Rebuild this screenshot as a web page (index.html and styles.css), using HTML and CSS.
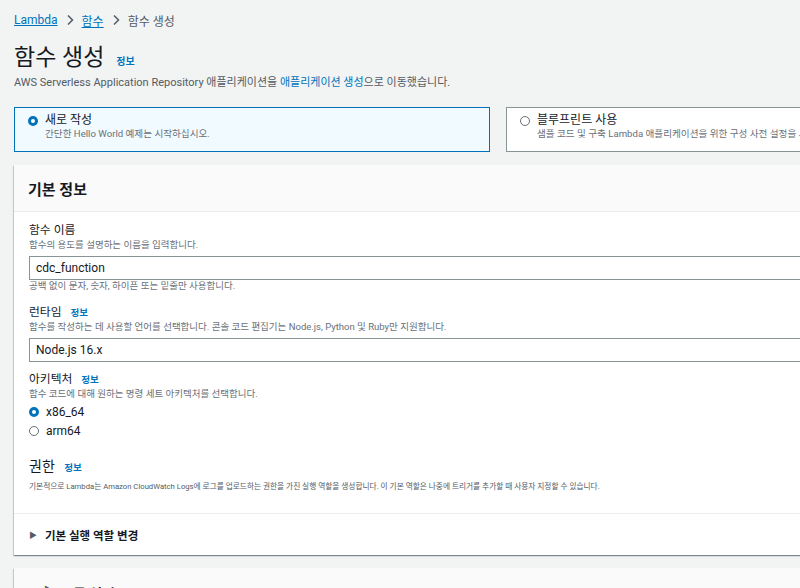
FILE: index.html
```html
<!DOCTYPE html>
<html lang="ko">
<head>
<meta charset="utf-8">
<title>함수 생성</title>
<link rel="stylesheet" href="styles.css">
</head>
<body>
<div class="page">
  <nav class="crumbs">
    <a class="link">Lambda</a>
    <svg class="chev" width="10" height="12" viewBox="0 0 10 12"><path d="M3 1.5 L7.5 6 L3 10.5" fill="none" stroke="#545b64" stroke-width="1.5"/></svg>
    <a class="link">함수</a>
    <svg class="chev" width="10" height="12" viewBox="0 0 10 12"><path d="M3 1.5 L7.5 6 L3 10.5" fill="none" stroke="#545b64" stroke-width="1.5"/></svg>
    <span class="current">함수 생성</span>
  </nav>

  <div class="title-row">
    <h1 class="title">함수 생성</h1>
    <span class="info big">정보</span>
  </div>
  <p class="subtitle">AWS Serverless Application Repository 애플리케이션을 <span class="blue">애플리케이션 생성</span>으로 이동했습니다.</p>

  <div class="tiles">
    <div class="tile selected">
      <span class="radio on"></span>
      <div class="tile-text">
        <div class="tile-title">새로 작성</div>
        <div class="tile-desc">간단한 Hello World 예제는 시작하십시오.</div>
      </div>
    </div>
    <div class="tile">
      <span class="radio"></span>
      <div class="tile-text">
        <div class="tile-title">블루프린트 사용</div>
        <div class="tile-desc">샘플 코드 및 구축 Lambda 애플리케이션을 위한 구성 사전 설정을 사용하여 구축합니다.</div>
      </div>
    </div>
  </div>

  <section class="card">
    <header class="card-head">기본 정보</header>
    <div class="card-body">
      <div class="field f-name">
        <div class="label">함수 이름</div>
        <div class="desc">함수의 용도를 설명하는 이름을 입력합니다.</div>
        <div class="input">cdc_function</div>
        <div class="hint">공백 없이 문자, 숫자, 하이픈 또는 밑줄만 사용합니다.</div>
      </div>
      <div class="field f-runtime">
        <div class="label">런타임 <span class="info">정보</span></div>
        <div class="desc">함수를 작성하는 데 사용할 언어를 선택합니다. 콘솔 코드 편집기는 Node.js, Python 및 Ruby만 지원합니다.</div>
        <div class="input">Node.js 16.x</div>
      </div>
      <div class="field f-arch">
        <div class="label">아키텍처 <span class="info">정보</span></div>
        <div class="desc">함수 코드에 대해 원하는 명령 세트 아키텍처를 선택합니다.</div>
        <div class="opts">
          <div class="opt"><span class="radio on"></span>x86_64</div>
          <div class="opt"><span class="radio"></span>arm64</div>
        </div>
      </div>
      <div class="field perm">
        <div class="perm-title">권한 <span class="info">정보</span></div>
        <div class="tiny">기본적으로 Lambda는 Amazon CloudWatch Logs에 로그를 업로드하는 권한을 가진 실행 역할을 생성합니다. 이 기본 역할은 나중에 트리거를 추가할 때 사용자 지정할 수 있습니다.</div>
      </div>
    </div>
    <div class="expander"><span class="tri">▶</span>기본 실행 역할 변경</div>
  </section>

  <section class="card second">
    <header class="card-head small"><span class="tri">▶</span>고급 설정</header>
  </section>
</div>
</body>
</html>
```

FILE: styles.css
```css
html, body {
  margin: 0;
  padding: 0;
  background: #f2f3f3;
  overflow: hidden;
}
body {
  font-family: "Roboto", "Noto Sans CJK KR", sans-serif;
  color: #16191f;
  width: 800px;
  height: 588px;
}
.page {
  width: 968px;
  padding: 11px 0 0 14px;
}
.crumbs {
  display: flex;
  align-items: center;
  gap: 5px;
  font-size: 12px;
  height: 18px;
}
.link {
  color: #0073bb;
  text-decoration: underline;
}
.current { color: #545b64; }
.chev { display: block; margin: 0 2px; }
.title-row {
  display: flex;
  align-items: baseline;
  gap: 12px;
  margin-top: 14px;
}
.title {
  margin: 0;
  font-size: 23px;
  font-weight: 400;
  line-height: 30px;
}
.info {
  color: #0073bb;
  font-size: 9.5px;
  font-weight: 700;
  margin-left: 6px;
}
.info.big { font-size: 10px; margin-left: 0; }
.subtitle {
  margin: 2px 0 0;
  font-size: 11px;
  line-height: 16px;
  color: #545b64;
}
.blue { color: #0073bb; }
.tiles {
  display: grid;
  grid-template-columns: 476px 476px;
  gap: 16px;
  margin-top: 16px;
}
.tile {
  display: flex;
  align-items: flex-start;
  gap: 7px;
  height: 45px;
  box-sizing: border-box;
  border: 1px solid #879596;
  background: #fff;
  padding: 5px 13px;
}
.tile.selected {
  border-color: #0073bb;
  background: #f1faff;
}
.radio {
  flex: none;
  width: 8px;
  height: 8px;
  border-radius: 50%;
  border: 1px solid #687078;
  background: #fff;
  margin-top: 3px;
}
.radio.on {
  width: 4px;
  height: 4px;
  border: 3px solid #0073bb;
}
.tile-title {
  font-size: 12px;
  line-height: 14px;
}
.tile-desc {
  font-size: 9.6px;
  line-height: 14px;
  color: #687078;
  white-space: nowrap;
}
.card {
  margin-top: 13px;
  background: #fff;
  box-shadow: 0 1px 1px 0 rgba(0,28,36,.3), 1px 1px 1px 0 rgba(0,28,36,.15), -1px 1px 1px 0 rgba(0,28,36,.15);
}
.card-head {
  background: #fafafa;
  border-bottom: 1px solid #eaeded;
  height: 46px;
  display: flex;
  align-items: center;
  padding-left: 14px;
  font-size: 15px;
  font-weight: 700;
}
.card-body {
  padding: 11px 0 0 15px;
}
.label {
  font-size: 11.8px;
  line-height: 15px;
}
.desc, .hint {
  font-size: 9.5px;
  line-height: 14px;
  color: #687078;
  white-space: nowrap;
}
.input {
  margin-top: 4px;
  height: 24px;
  box-sizing: border-box;
  border: 1px solid #879596;
  font-size: 12px;
  line-height: 22px;
  padding-left: 6px;
}
.hint { line-height: 12px; }
.f-name { margin-bottom: 13px; }
.f-runtime { margin-bottom: 10px; }
.opts { margin-top: 1px; }
.opt {
  display: flex;
  align-items: center;
  gap: 7px;
  font-size: 12px;
  height: 20px;
}
.opt:last-child { margin-top: -1px; }
.opt .radio { margin-top: 0; }
.perm { margin-top: 16px; padding-bottom: 20px; }
.perm-title {
  font-size: 14px;
  line-height: 18px;
}
.tiny {
  margin-top: 4px;
  font-size: 7.7px;
  line-height: 12px;
  color: #545b64;
  white-space: nowrap;
}
.expander {
  border-top: 1px solid #eaeded;
  height: 41px;
  display: flex;
  align-items: center;
  padding-left: 15px;
  font-size: 11.5px;
  font-weight: 700;
  color: #16191f;
}
.tri {
  font-size: 8px;
  margin-right: 8px;
  color: #545b64;
}
.card.second { margin-top: 13px; }
.card-head.small {
  font-size: 14px;
  padding-left: 30px;
  padding-top: 15px;
  height: 40px;
  align-items: flex-start;
}
```
